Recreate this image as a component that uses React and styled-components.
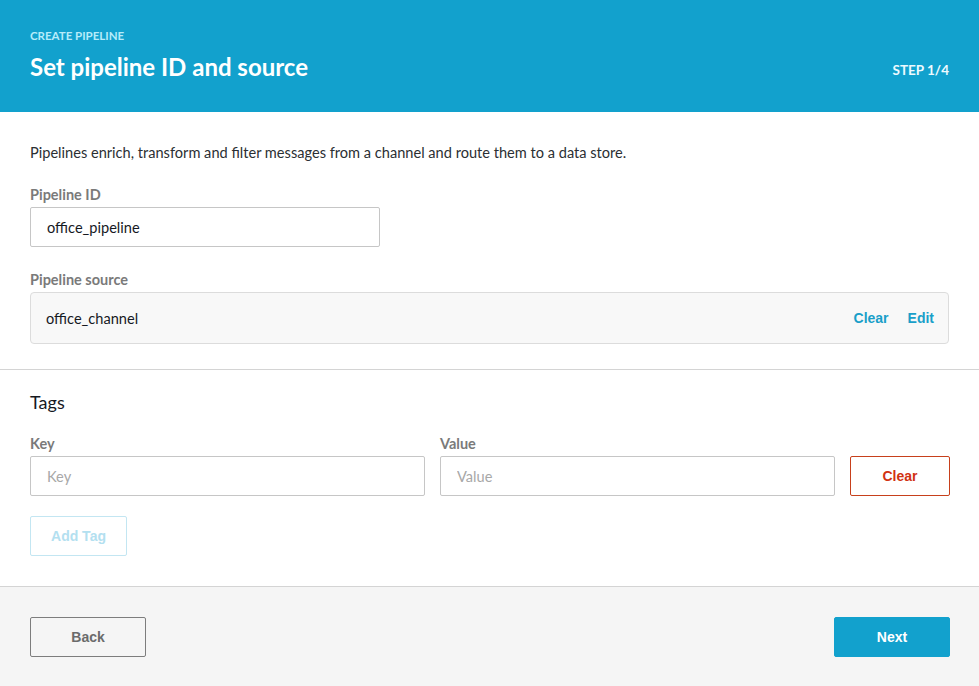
import React from "react";
import styled, { createGlobalStyle } from "styled-components";

const GlobalStyle = createGlobalStyle`
  html, body {
    margin: 0;
    padding: 0;
    background-color: #fff;
  }
  body {
    font-family: "Lato", "Open Sans", sans-serif;
    color: #16191f;
  }
  * {
    box-sizing: border-box;
  }
`;

const Page = styled.div`
  width: 979px;
  height: 686px;
  display: flex;
  flex-direction: column;
  background-color: #fff;
  overflow: hidden;
`;

const Header = styled.header`
  height: 112px;
  background-color: #12a1cd;
  padding: 0 30px;
  display: flex;
  align-items: flex-end;
  justify-content: space-between;
  padding-bottom: 31px;
`;

const HeaderText = styled.div`
  display: flex;
  flex-direction: column;
  > span {
    font-size: 11.5px;
    font-weight: 700;
    color: #b6ecfa;
    margin-bottom: 11px;
  }
  > h1 {
    margin: 0;
    font-size: 24px;
    line-height: 28px;
    font-weight: 700;
    color: #fff;
  }
`;

const Step = styled.div`
  font-size: 13.5px;
  font-weight: 700;
  color: #eefaff;
  padding-bottom: 3px;
`;

const Section = styled.section`
  padding: 32px 30px 25px;
  border-bottom: 1px solid #d4d4d4;
  > p {
    margin: 0 0 24px;
    font-size: 14.6px;
    line-height: 18px;
    color: #2b2f33;
  }
`;

const Field = styled.div`
  display: flex;
  flex-direction: column;
  margin-bottom: ${(p) => p.$gap || 0}px;
`;

const Label = styled.label`
  font-size: 14.5px;
  font-weight: 700;
  color: #7a7a7a;
  line-height: 18px;
  margin-bottom: 3px;
`;

const Input = styled.input`
  width: ${(p) => p.$width || "100%"};
  height: 40px;
  border: 1px solid #c6c6c6;
  border-radius: 2px;
  padding: 0 16px;
  font-family: inherit;
  font-size: 14.6px;
  color: #16191f;
  outline: none;
  &::placeholder {
    color: #a8a8a8;
  }
`;

const SourceBox = styled.div`
  height: 52px;
  background-color: #f8f8f8;
  border: 1px solid #dcdcdc;
  border-radius: 4px;
  display: flex;
  align-items: center;
  justify-content: space-between;
  padding: 0 14px 0 15px;
  font-size: 14.6px;
  color: #16191f;
`;

const LinkGroup = styled.div`
  display: flex;
  gap: 19px;
`;

const LinkButton = styled.a`
  font-family: "Liberation Sans", Arial, sans-serif;
  font-size: 14px;
  font-weight: 700;
  color: #1a9fc9;
  cursor: pointer;
`;

const TagsSection = styled.section`
  padding: 21px 30px 30px;
  border-bottom: 1px solid #d4d4d4;
  > h2 {
    margin: 0 0 22px;
    font-size: 18px;
    line-height: 22px;
    font-weight: 400;
    color: #16191f;
  }
`;

const TagRow = styled.div`
  display: grid;
  grid-template-columns: 395px 395px 100px;
  column-gap: 15px;
  align-items: end;
`;

const Button = styled.button`
  height: 40px;
  width: ${(p) => p.$width}px;
  border-radius: 2px;
  font-family: "Liberation Sans", Arial, sans-serif;
  font-size: 14px;
  font-weight: 700;
  cursor: pointer;
  background-color: ${(p) => p.$bg || "transparent"};
  border: 1px solid ${(p) => p.$border};
  color: ${(p) => p.$color};
`;

const AddTagWrap = styled.div`
  margin-top: 20px;
`;

const Footer = styled.footer`
  flex: 1;
  background-color: #f5f5f5;
  padding: 30px 29px 0 30px;
  display: flex;
  justify-content: space-between;
  align-items: flex-start;
`;

const App = () => {
  return (
    <Page>
      <GlobalStyle />
      <Header>
        <HeaderText>
          <span>CREATE PIPELINE</span>
          <h1>Set pipeline ID and source</h1>
        </HeaderText>
        <Step>STEP 1/4</Step>
      </Header>

      <Section>
        <p>
          Pipelines enrich, transform and filter messages from a channel and
          route them to a data store.
        </p>
        <Field $gap={24}>
          <Label>Pipeline ID</Label>
          <Input $width="350px" defaultValue="office_pipeline" />
        </Field>
        <Field>
          <Label>Pipeline source</Label>
          <SourceBox>
            <span>office_channel</span>
            <LinkGroup>
              <LinkButton>Clear</LinkButton>
              <LinkButton>Edit</LinkButton>
            </LinkGroup>
          </SourceBox>
        </Field>
      </Section>

      <TagsSection>
        <h2>Tags</h2>
        <TagRow>
          <Field>
            <Label>Key</Label>
            <Input placeholder="Key" />
          </Field>
          <Field>
            <Label>Value</Label>
            <Input placeholder="Value" />
          </Field>
          <Button $width={100} $border="#c7401c" $color="#d13212" $bg="#fff">
            Clear
          </Button>
        </TagRow>
        <AddTagWrap>
          <Button $width={97} $border="#c3e6f2" $color="#b3e0f0" $bg="#fff">
            Add Tag
          </Button>
        </AddTagWrap>
      </TagsSection>

      <Footer>
        <Button $width={116} $border="#7d7d7d" $color="#6b6b6b">
          Back
        </Button>
        <Button $width={116} $border="#12a1cd" $color="#fff" $bg="#12a1cd">
          Next
        </Button>
      </Footer>
    </Page>
  );
};

export default App;
